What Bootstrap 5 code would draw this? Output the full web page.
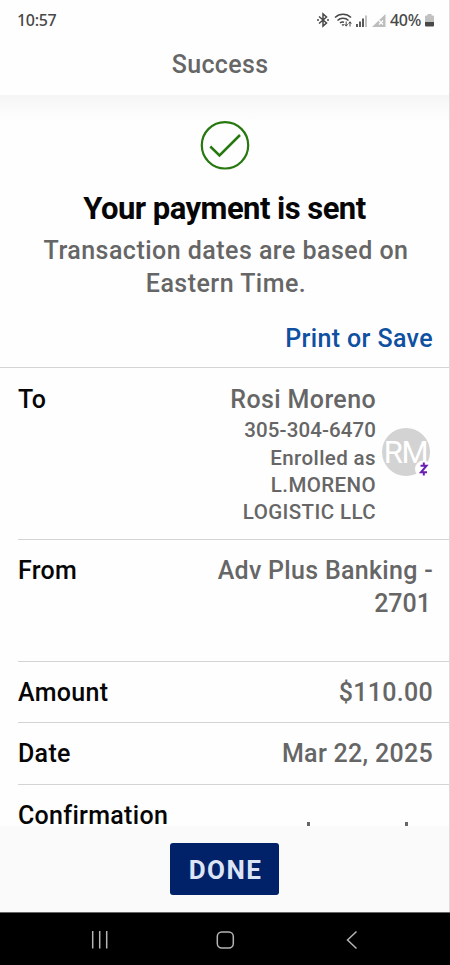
<!DOCTYPE html>
<html lang="en">
<head>
<meta charset="utf-8">
<meta name="viewport" content="width=device-width, initial-scale=1">
<title>Success</title>
<link rel="stylesheet" href="https://cdn.jsdelivr.net/npm/bootstrap@5.3.0/dist/css/bootstrap.min.css">
<style>
body{font-family:Roboto,"Liberation Sans",sans-serif;font-size:25px;font-weight:500;line-height:33px;color:#666;background:#fefefe}
.phone{width:450px;height:965px}
.page-edge{border-right:1px solid #dcdcdc;min-height:0}
.status{height:40px;padding:0 15px 0 17px;font-size:16px;line-height:40px;color:#484848}
.status-time{font-family:"Noto Sans",sans-serif;letter-spacing:-.3px}
.status-batt{font-family:"Noto Sans",sans-serif;font-size:16px;letter-spacing:-.3px}
.app-title{height:55px;padding-top:8px;padding-right:9px;letter-spacing:.35px}
.content-area{min-height:0;background:linear-gradient(#f5f5f5,#fafafa 12px,#fefefe 28px)}
.check{margin-top:25px}
.headline{font-size:31px;font-weight:700;line-height:38px;color:#060606;letter-spacing:-.54px;margin-top:20px}
.subtitle{letter-spacing:.47px;margin-top:6px;padding-left:3px}
.print-link{color:#0f50a0;letter-spacing:.38px;margin-top:22px;height:45px;padding-right:16px}
.rule-top{border-top:1px solid #d4d4d4}
.detail{margin-left:18px;border-top:1px solid #d4d4d4;padding:14px 16px 0 0;letter-spacing:.3px}
.detail:first-child{border-top:0;padding-top:15px}
.detail-label{color:#060606}
.row-to{height:171px}.row-from{height:122px}.row-short{height:61.4px}
.recipient{font-size:20.5px;line-height:27px;letter-spacing:.4px}
.recipient-name{font-size:25px;line-height:33px;letter-spacing:.38px}
.recipient-phone{letter-spacing:.1px;line-height:29px}
.avatar{width:48px;height:48px;margin:45px 3px 0 6px;flex:none}
.account-tail{padding-right:2px;letter-spacing:0}
.masked-code{margin-right:16px}
.action-bar{height:86px;background:#fafafa}
.btn-done{width:109px;height:52px;border-radius:3px;background:#012169;color:#dce4f5;font-size:26px;font-weight:700;letter-spacing:1.4px;line-height:54px}
.btn-done span{padding-left:2px}
.nav-keys{height:53px;background:#000;border-top:1px solid #666}
svg{display:block;flex:none}
</style>
<script src="https://cdn.jsdelivr.net/npm/bootstrap@5.3.0/dist/js/bootstrap.bundle.min.js"></script>
</head>
<body>
<div class="phone d-flex flex-column overflow-hidden">
  <div class="page-edge d-flex flex-column flex-grow-1">
    <header class="flex-shrink-0">
      <div class="status d-flex justify-content-between align-items-center">
        <span class="status-time">10:57</span>
        <div class="d-flex align-items-center">
          <svg width="74" height="18" viewBox="0 0 74 18" fill="none">
            <path d="M3 5.500l7.500 6.500L7 15V3l3.500 3L3 12.500M1 9h2M11 9h2" stroke="#484848" stroke-width="1.500"/>
            <path d="M19 6.500c4.500-4.300 11.500-4.300 16 0M21.500 9.500c3-3 8-3 11 0M24 12c1-1 2.500-1.300 4-.8" stroke="#484848" stroke-width="1.500"/>
            <path d="M30.200 10.500v4.500M28.800 13.200l1.400 2 1.400-2M34 15.500V11M32.700 12.700l1.300-2 1.300 2" stroke="#484848" stroke-width="1"/>
            <path d="M25.500 13.200h3l-1.500 2z" fill="#484848"/>
            <path d="M41 13v3M44 10.500V16M47 7.500V16" stroke="#484848" stroke-width="1.800"/>
            <path d="M50 4.500V16" stroke="#bbb" stroke-width="1.800"/>
            <path d="M69.500 3v13H56z" fill="#bdbdbd"/>
            <path d="M63 9.500l4 4m0-4l-4 4" stroke="#fff" stroke-width="1.300"/>
          </svg>
          <span class="status-batt">40%</span>
          <svg class="ms-1" width="9" height="13" viewBox="0 0 9 13"><path d="M2.500 0h4v1.500H8a1 1 0 0 1 1 1V8H0V2.500a1 1 0 0 1 1-1h1.500z" fill="#c1c1c1"/><path d="M0 8h9v3.500a1 1 0 0 1-1 1H1a1 1 0 0 1-1-1z" fill="#484848"/></svg>
        </div>
      </div>
      <div class="app-title text-center">Success</div>
    </header>

    <main class="content-area flex-grow-1 overflow-hidden">
      <svg class="check mx-auto" width="50" height="50" viewBox="0 0 50 50" fill="none" stroke="#26780f" stroke-width="2.200"><circle cx="25" cy="25.300" r="23.200"/><path d="M10.300 26.500l9.200 9L40 15" stroke-width="2.500"/></svg>
      <h1 class="headline text-center mb-0">Your payment is sent</h1>
      <p class="subtitle text-center mb-0">Transaction dates are based on<br>Eastern Time.</p>
      <div class="print-link text-end"><a class="text-reset text-decoration-none" href="#">Print or Save</a></div>
      <div class="rule-top">
        <div class="detail row-to d-flex">
          <div class="detail-label me-auto">To</div>
          <div class="recipient text-end">
            <div class="recipient-name">Rosi Moreno</div>
            <div class="recipient-phone">305-304-6470</div>
            Enrolled as<br>L.MORENO<br>LOGISTIC LLC
          </div>
          <svg class="avatar" viewBox="0 0 48 48"><circle cx="24" cy="24" r="24" fill="#d3d3d3"/><text x="1.800" y="34.500" font-size="31" font-weight="400" fill="#fff" textLength="45">RM</text><circle cx="41.500" cy="41" r="8.500" fill="#fefefe"/><path d="M38.500 37.700h6l-5.500 6.600h6M41.800 34.500v3M41.800 44.500v3" fill="none" stroke="#6a1fb0" stroke-width="2"/></svg>
        </div>
        <div class="detail row-from d-flex justify-content-between">
          <div class="detail-label">From</div>
          <div class="text-end">Adv Plus Banking -<br><span class="account-tail">2701</span></div>
        </div>
        <div class="detail row-short d-flex justify-content-between"><div class="detail-label">Amount</div><div>$110.00</div></div>
        <div class="detail row-short d-flex justify-content-between"><div class="detail-label">Date</div><div>Mar 22, 2025</div></div>
        <div class="detail row-short d-flex justify-content-between">
          <div class="detail-label">Confirmation</div>
          <svg class="masked-code" width="110" height="40" viewBox="0 0 110 40" fill="#666"><path d="M0 23h3v10H0zM98 23h3v10h-3z"/></svg>
        </div>
      </div>
    </main>

    <div class="action-bar d-flex flex-shrink-0 justify-content-center align-items-center">
      <button class="btn-done btn border-0 p-0" type="button"><span>DONE</span></button>
    </div>
  </div>
  <nav class="nav-keys flex-shrink-0">
    <svg width="450" height="52" viewBox="0 0 450 52" fill="none" stroke="#b5b5b5" stroke-width="1.500"><path d="M92.700 18v17.500M99.700 18v17.500M106.700 18v17.500M356.500 18.500l-9 8.500 9 8.500"/><rect x="217.300" y="19" width="16" height="16" rx="4.500"/></svg>
  </nav>
</div>
</body>
</html>
